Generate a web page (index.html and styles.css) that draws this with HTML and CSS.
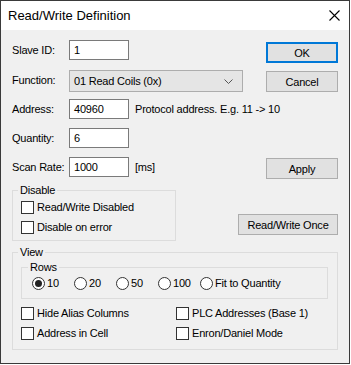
FILE: index.html
```html
<!DOCTYPE html>
<html>
<head>
<meta charset="utf-8" />
<title>Read/Write Definition</title>
<link rel="stylesheet" href="styles.css">
</head>
<body>
<div class="window">
  <div class="titlebar">
    <span class="title">Read/Write Definition</span>
    <svg class="close" width="11" height="11" viewBox="0 0 11 11"><path d="M0.5 0.5L10.5 10.5M10.5 0.5L0.5 10.5" stroke="#000" stroke-width="1.1" fill="none"/></svg>
  </div>
  <div class="client">
    <div class="row r1">
      <span class="lbl">Slave ID:</span>
      <div class="edit">1</div>
      <button class="btn default">OK</button>
    </div>
    <div class="row r2">
      <span class="lbl">Function:</span>
      <div class="combo">01 Read Coils (0x)
        <svg class="chev" width="9" height="5" viewBox="0 0 9 5"><path d="M0.5 0.5L4.5 4.5L8.5 0.5" stroke="#555" stroke-width="1" fill="none"/></svg>
      </div>
      <button class="btn cancel">Cancel</button>
    </div>
    <div class="row r3">
      <span class="lbl">Address:</span>
      <div class="edit">40960</div>
      <span class="note">Protocol address. E.g. 11 -&gt; 10</span>
    </div>
    <div class="row r4">
      <span class="lbl">Quantity:</span>
      <div class="edit">6</div>
    </div>
    <div class="row r5">
      <span class="lbl">Scan Rate:</span>
      <div class="edit">1000</div>
      <span class="note">[ms]</span>
      <button class="btn apply">Apply</button>
    </div>
    <div class="disable-row">
      <fieldset class="group disable">
        <legend>Disable</legend>
        <div class="check"><span class="box"></span>Read/Write Disabled</div>
        <div class="check"><span class="box"></span>Disable on error</div>
      </fieldset>
      <button class="btn once">Read/Write Once</button>
    </div>
    <fieldset class="group view">
      <legend>View</legend>
      <fieldset class="group rows">
        <legend>Rows</legend>
        <div class="radios">
          <div class="radio"><span class="dot on"></span>10</div>
          <div class="radio"><span class="dot"></span>20</div>
          <div class="radio"><span class="dot"></span>50</div>
          <div class="radio"><span class="dot"></span>100</div>
          <div class="radio"><span class="dot"></span>Fit to Quantity</div>
        </div>
      </fieldset>
      <div class="opts">
        <div class="check"><span class="box"></span>Hide Alias Columns</div>
        <div class="check"><span class="box"></span>PLC Addresses (Base 1)</div>
        <div class="check"><span class="box"></span>Address in Cell</div>
        <div class="check"><span class="box"></span>Enron/Daniel Mode</div>
      </div>
    </fieldset>
  </div>
</div>
</body>
</html>
```

FILE: styles.css
```css
body { margin:0; background:#fff; font-family:"Liberation Sans", Arial, sans-serif; font-size:11px; letter-spacing:-0.2px; color:#000; }
.window { width:350px; height:364px; box-sizing:border-box; border:1px solid #3a3a3a; background:#f0f0f0; display:flex; flex-direction:column; }
.titlebar { height:29px; background:#fff; display:flex; align-items:center; padding:0 9px 0 7px; flex:none; }
.title { font-size:13px; letter-spacing:0; flex:1; padding-bottom:1px; }
.client { padding:10px 11px 0 11px; }

.row { display:flex; align-items:flex-start; }
.r1 { height:30px; }
.r2, .r3, .r4 { height:29px; }
.r5 { height:27px; }
.lbl { width:57px; line-height:20px; flex:none; }
.edit { width:60px; height:20px; box-sizing:border-box; border:1px solid #7a7a7a; background:#fff; padding-left:4px; line-height:18px; flex:none; }
.note { line-height:20px; margin-left:6px; }
.combo { width:174px; height:22px; box-sizing:border-box; border:1px solid #adadad; background:#e5e5e5; padding:0 9px 0 4px; line-height:20px; display:flex; justify-content:space-between; align-items:center; }

.btn { font:inherit; letter-spacing:inherit; width:72px; height:21px; box-sizing:border-box; border:1px solid #adadad; background:#e1e1e1; padding:0; color:#000; margin-left:auto; }
.r1 .btn { margin-top:2px; }
.r2 .btn { margin-top:1px; }
.r5 .btn { margin-top:1px; }
.btn.default { border:2px solid #0078d7; }
.btn.once { width:100px; align-self:flex-end; margin-bottom:6px; }

.group { margin:0; border:1px solid #dcdcdc; padding:0; min-width:0; }
.group legend { padding:0 2px; line-height:13px; }
.disable-row { display:flex; }
.disable { width:164px; box-sizing:border-box; padding:0 0 3px 8px; }
.disable > legend, .view > legend { margin-left:-3px; }
.check { display:flex; align-items:center; height:20px; }
.box { width:13px; height:13px; box-sizing:border-box; border:1px solid #333; background:#fff; margin-right:3px; flex:none; }

.view { margin-top:5px; width:326px; box-sizing:border-box; padding:0 0 6px 8px; }
.rows { margin:2px 9px 0 0; padding:0 0 6px 10px; }
.rows > legend { margin-left:-4px; }
.radios { display:grid; grid-template-columns:42px 42px 42px 42px auto; height:18px; align-items:center; }
.radio { display:flex; align-items:center; }
.dot { width:13px; height:13px; box-sizing:border-box; border:1px solid #333; border-radius:50%; background:#fff; margin-right:2px; display:flex; align-items:center; justify-content:center; }
.dot.on::after { content:""; width:7px; height:7px; border-radius:50%; background:#222; }
.opts { display:grid; grid-template-columns:155px auto; margin-top:4px; }
```
